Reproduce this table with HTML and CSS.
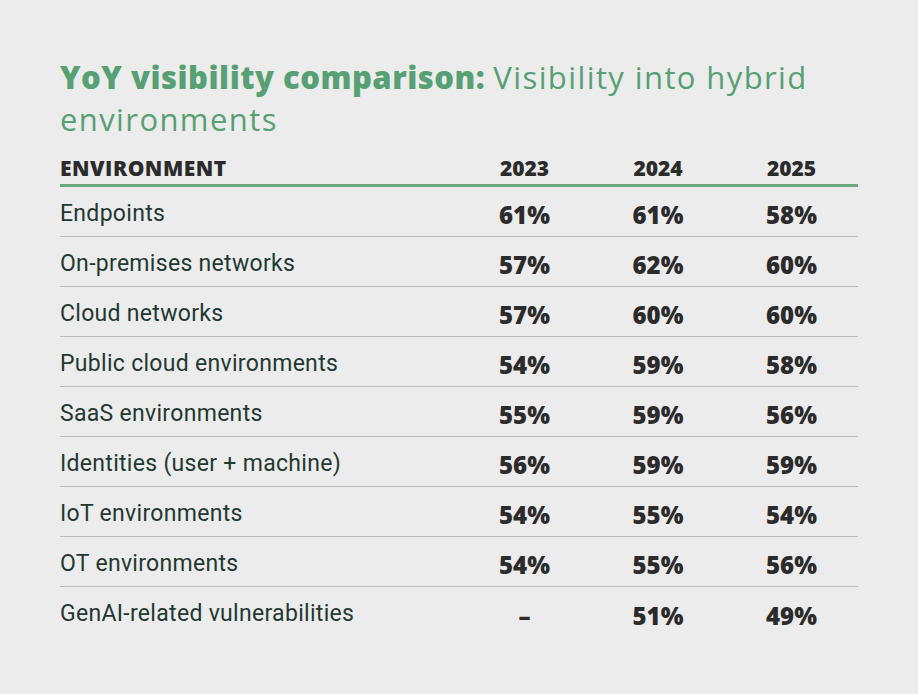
FILE: index.html
```html
<!DOCTYPE html>
<html>
<head>
<meta charset="utf-8">
<link rel="stylesheet" href="styles.css">
</head>
<body>
<main class="page">
  <h1 class="title"><span class="title-bold">YoY visibility comparison:</span> <span class="title-light">Visibility into hybrid</span> <span class="title-light">environments</span></h1>
  <div class="table">
    <div class="row head">
      <div class="label">ENVIRONMENT</div><div class="num">2023</div><div class="num">2024</div><div class="num">2025</div>
    </div>
    <div class="row"><div class="label">Endpoints</div><div class="num">61%</div><div class="num">61%</div><div class="num">58%</div></div>
    <div class="row"><div class="label">On-premises networks</div><div class="num">57%</div><div class="num">62%</div><div class="num">60%</div></div>
    <div class="row"><div class="label">Cloud networks</div><div class="num">57%</div><div class="num">60%</div><div class="num">60%</div></div>
    <div class="row"><div class="label">Public cloud environments</div><div class="num">54%</div><div class="num">59%</div><div class="num">58%</div></div>
    <div class="row"><div class="label">SaaS environments</div><div class="num">55%</div><div class="num">59%</div><div class="num">56%</div></div>
    <div class="row"><div class="label">Identities (user + machine)</div><div class="num">56%</div><div class="num">59%</div><div class="num">59%</div></div>
    <div class="row"><div class="label">IoT environments</div><div class="num">54%</div><div class="num">55%</div><div class="num">54%</div></div>
    <div class="row"><div class="label">OT environments</div><div class="num">54%</div><div class="num">55%</div><div class="num">56%</div></div>
    <div class="row last"><div class="label">GenAI-related vulnerabilities</div><div class="num dash">–</div><div class="num">51%</div><div class="num">49%</div></div>
  </div>
</main>
</body>
</html>
```

FILE: styles.css
```css
html, body {
  margin: 0;
  padding: 0;
  background: #ececec;
}
.page {
  width: 798px;
  padding: 56px 0 0 60px;
}
.title {
  margin: 0;
  font-family: "Open Sans", "Liberation Sans", sans-serif;
  font-weight: 400;
  font-size: 31px;
  line-height: 42px;
  color: #57a074;
}
.title-bold {
  font-weight: 800;
  letter-spacing: 0.5px;
}
.title-light {
  letter-spacing: 1.4px;
}
.table {
  margin-top: 9px;
}
.row {
  display: grid;
  grid-template-columns: 398px 133px 134px 133px;
  height: 50px;
  box-sizing: border-box;
  align-items: center;
  border-bottom: 1px solid #bdbdbd;
}
.row.head {
  height: 38px;
  padding-top: 7px;
  border-bottom: 3px solid #6aa67e;
  align-items: start;
}
.row.last {
  border-bottom: none;
}
.label {
  font-family: Roboto, "Liberation Sans", sans-serif;
  font-size: 23px;
  letter-spacing: 0.3px;
  color: #233831;
  padding-top: 3px;
}
.num {
  text-align: center;
  font-family: "Open Sans", "Liberation Sans", sans-serif;
  font-weight: 800;
  font-size: 24px;
  color: #2b2b2b;
  padding-top: 6px;
}
.head .label, .head .num {
  font-family: "Open Sans", "Liberation Sans", sans-serif;
  font-weight: 800;
  font-size: 21px;
  color: #2b2b2b;
  line-height: 24px;
  padding-top: 0;
}
.head .label {
  letter-spacing: 0.5px;
}
```
